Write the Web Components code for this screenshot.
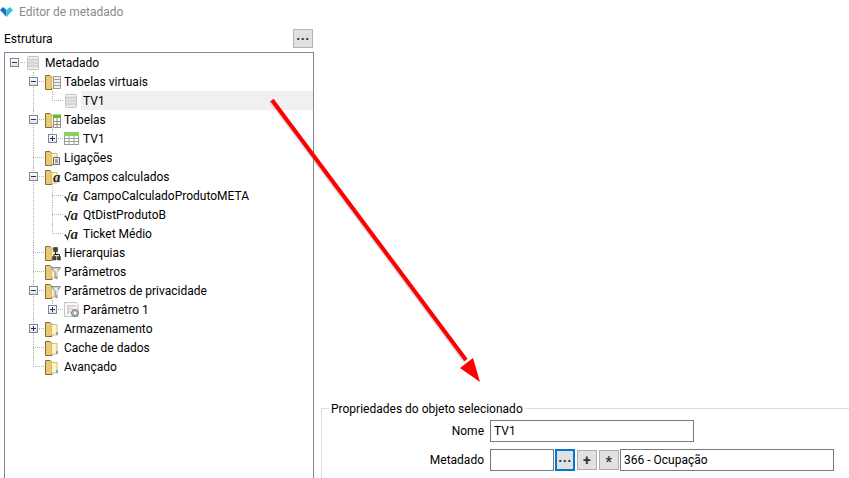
<!DOCTYPE html>
<html>
<head>
<meta charset="utf-8">
<title>Editor de metadado</title>
<style>
    html, body { margin: 0; height: 100%; background: #fff; overflow: hidden; }
    body { font: 12px Roboto, "Noto Sans", sans-serif; color: #000; }
</style>
</head>
<body>
<meta-editor>
    <meta-tree slot="tree">
        <tree-node toggle="minus" icon="table" label="Metadado" root>
            <tree-node toggle="minus" icon="folder-table" label="Tabelas virtuais">
                <tree-node icon="table" label="TV1" selected last></tree-node>
            </tree-node>
            <tree-node toggle="minus" icon="folder-grid" label="Tabelas">
                <tree-node toggle="plus" icon="grid" label="TV1" last></tree-node>
            </tree-node>
            <tree-node icon="folder-link" label="Ligações"></tree-node>
            <tree-node toggle="minus" icon="folder-a" label="Campos calculados">
                <tree-node icon="sqrt" label="CampoCalculadoProdutoMETA"></tree-node>
                <tree-node icon="sqrt" label="QtDistProdutoB"></tree-node>
                <tree-node icon="sqrt" label="Ticket Médio" last></tree-node>
            </tree-node>
            <tree-node icon="folder-tree" label="Hierarquias"></tree-node>
            <tree-node icon="folder-filter" label="Parâmetros"></tree-node>
            <tree-node toggle="minus" icon="folder-filter" label="Parâmetros de privacidade">
                <tree-node toggle="plus" icon="param" label="Parâmetro 1" last></tree-node>
            </tree-node>
            <tree-node toggle="plus" icon="folder" label="Armazenamento"></tree-node>
            <tree-node icon="folder" label="Cache de dados"></tree-node>
            <tree-node icon="folder" label="Avançado" last></tree-node>
        </tree-node>
    </meta-tree>
    <prop-group slot="props" title="Propriedades do objeto selecionado">
        <prop-row label="Nome">
            <text-box value="TV1" style="width:204px"></text-box>
        </prop-row>
        <prop-row label="Metadado">
            <text-box style="width:64px"></text-box>
            <tool-button text="..." focused style="margin-left:1px"></tool-button>
            <tool-button text="+" style="margin-left:2px"></tool-button>
            <tool-button text="*" style="margin-left:2px"></tool-button>
            <text-box value="366 - Ocupação" style="width:214px;margin-left:1px"></text-box>
        </prop-row>
    </prop-group>
</meta-editor>

<script>
// Icons for the tree, all drawn in a 16x16 box
const folderBack = `
    <path d="M.5 1.500h4.500l2 2v12h-6.500z" fill="#e9c877" stroke="#8a6d2c"/>
    <path d="M6.500 3.500h5.500v10.500h-5.500z" fill="#fdf3c4" stroke="#d9bd6e"/>`;

const ICONS = {
    "folder": folderBack + `<path d="M12 11v3" stroke="#4f9ad8" stroke-width="1.500"/>`,
    "table": `
        <rect x="1.500" y="1.500" width="11" height="13" rx="1" fill="#f2f2f2" stroke="#c2c2c2"/>
        <path d="M2 5h10M2 8h10M2 11h10" stroke="#b9b9b9" fill="none"/>
        <path d="M2 3.500h10M2 6.500h10M2 9.500h10M2 12.500h10" stroke="#e6e6e6" fill="none"/>`,
    "folder-table": folderBack + `
        <path d="M8.500 2.500h7v12h-7z" fill="#f2f2f2" stroke="#9c9c9c"/>
        <path d="M9 5.500h6M9 8.500h6M9 11.500h6" stroke="#9c9c9c"/>`,
    "folder-grid": folderBack + `
        <path d="M8.500 5.500h7v10h-7z" fill="#fff" stroke="#8f8f8f"/>
        <path d="M8 2.500h8v3.500h-8z" fill="#5dbd36"/>
        <path d="M9 9.500h6M9 12.500h6M12 6v9" stroke="#8f8f8f"/>`,
    "grid": `
        <path d="M.5 3.500h14v10h-14z" fill="#fff" stroke="#96998c"/>
        <path d="M0 1h15v4h-15z" fill="#8bd064"/>
        <path d="M1 7.500h13M1 10.500h13M5 5v8M10 5v8" stroke="#a0a398"/>`,
    "folder-link": folderBack + `
        <path d="M8.500 7.500h6v7h-6z" fill="#eee" stroke="#666"/>
        <path d="M10 10h3M10 12h3" stroke="#555"/>`,
    "folder-a": folderBack + `
        <text x="8" y="13" font-family="Liberation Serif, serif" font-style="italic" font-weight="700" font-size="15" fill="#222">a</text>`,
    "folder-tree": folderBack + `
        <path d="M8.500 2.500h4v4h-4zM7.500 11.500h3.500v3.500h-3.500zM12.500 11.500h3v3.500h-3z" fill="#444" stroke="#222" stroke-width=".5"/>
        <path d="M10.500 6.500v3M9 11.500v-2h5.500v2" stroke="#222" fill="none"/>`,
    "folder-filter": folderBack + `
        <path d="M6.500 3.500h9l-3.500 5v6.500l-2-1.500v-5z" fill="#cfd2d6" stroke="#858a90"/>
        <path d="M9 6h3v6" stroke="#fff" fill="none"/>`,
    "sqrt": `
        <path d="M.5 9.500l1-.5 2 4 2.500-8.500h2" fill="none" stroke="#2a2a2a" stroke-width="1.200"/>
        <text x="6.500" y="13" font-family="Liberation Serif, serif" font-style="italic" font-weight="700" font-size="15" fill="#2a2a2a">a</text>`,
    "param": `
        <path d="M.5 .5h12l1.500 1.500v12.500h-13.500z" fill="#f8f8f8" stroke="#c2c6ca"/>
        <path d="M3 4h9M3 7h6M3 10h4" stroke="#dfa69e"/>
        <path d="M4 4v8" stroke="#a9c6e0"/>
        <circle cx="11" cy="11" r="3.500" fill="#b5bcc3" stroke="#6f7880"/>
        <circle cx="11" cy="11" r="1.200" fill="#fff"/>`
};

const nodeTemplate = document.createElement("template");
nodeTemplate.innerHTML = `
    <style>
    :host {
        display: block;
        position: relative;
    }

    .row {
        display: flex;
        align-items: center;
        height: 19px;
        padding-left: 5px;
        position: relative;
    }

    .toggle {
        width: 9px;
        height: 9px;
        box-sizing: border-box;
        border: 1px solid #7b8794;
        background: linear-gradient(#fff, #e2e2e2);
        position: relative;
        margin-right: 7px;
        flex: none;
        z-index: 1;
    }

    .toggle.none {
        visibility: hidden;
    }

    .toggle::before, .toggle.plus::after {
        content: "";
        position: absolute;
        background: #24306b;
    }

    .toggle::before {
        left: 1px;
        right: 1px;
        top: 3px;
        height: 1px;
    }

    .toggle.plus::after {
        top: 1px;
        bottom: 1px;
        left: 3px;
        width: 1px;
    }

    svg {
        width: 16px;
        height: 16px;
        flex: none;
        overflow: visible;
        position: relative;
        z-index: 1;
    }

    .label {
        white-space: nowrap;
        margin-left: 1px;
        padding-left: 2px;
        height: 19px;
        line-height: 20px;
        flex: 1;
    }

    :host([selected]) .label {
        background: #f0f0f0;
    }

    /* dotted connectors over the tree background */
    .hline, .vline {
        position: absolute;
    }

    .hline {
        left: 9px;
        top: 9px;
        width: 11px;
        border-top: 1px dotted #b4b4b4;
    }

    .vline {
        left: 9px;
        top: 0;
        bottom: 0;
        border-left: 1px dotted #b4b4b4;
    }

    :host([last]) .vline {
        bottom: auto;
        height: 10px;
    }

    :host([root]) .vline {
        display: none;
    }

    .kids {
        margin-left: 19px;
    }
    </style>
    <span class="vline"></span>
    <div class="row">
        <span class="hline"></span>
        <span class="toggle"></span>
        <svg viewBox="0 0 16 16"></svg>
        <span class="label"></span>
    </div>
    <div class="kids"><slot></slot></div>
`;

class TreeNode extends HTMLElement {

    constructor() {
        super();
        this.root = this.attachShadow({ mode: "open" });
        this.root.appendChild(nodeTemplate.content.cloneNode(true));
    }

    connectedCallback() {
        this.root.querySelector(".label").textContent = this.getAttribute("label");
        this.root.querySelector("svg").innerHTML = ICONS[this.getAttribute("icon")] || "";
        this.root.querySelector(".toggle").classList.add(this.getAttribute("toggle") || "none");
    }
}

const treeTemplate = document.createElement("template");
treeTemplate.innerHTML = `
    <style>
    :host {
        display: block;
        height: 100%;
        box-sizing: border-box;
        border: 1px solid #828790;
        border-bottom: none;
        background: #fff;
        overflow: hidden;
    }
    </style>
    <slot></slot>
`;

class MetaTree extends HTMLElement {
    constructor() {
        super();
        this.attachShadow({ mode: "open" }).appendChild(treeTemplate.content.cloneNode(true));
    }
}

const boxTemplate = document.createElement("template");
boxTemplate.innerHTML = `
    <style>
    :host {
        display: block;
        height: 22px;
        box-sizing: border-box;
        border: 1px solid #7a7a7a;
        background: #fff;
        padding-left: 3px;
        line-height: 20px;
        white-space: nowrap;
        flex: none;
    }
    </style>
    <span></span>
`;

class TextBox extends HTMLElement {
    constructor() {
        super();
        this.root = this.attachShadow({ mode: "open" });
        this.root.appendChild(boxTemplate.content.cloneNode(true));
    }

    connectedCallback() {
        this.root.querySelector("span").textContent = this.getAttribute("value") || "";
    }
}

const buttonTemplate = document.createElement("template");
buttonTemplate.innerHTML = `
    <style>
    :host {
        display: flex;
        align-items: center;
        justify-content: center;
        width: 20px;
        height: 20px;
        margin-top: 1px;
        box-sizing: border-box;
        border: 1px solid #adadad;
        background: #e1e1e1;
        color: #333;
        font-weight: 700;
        flex: none;
    }

    :host([focused]) {
        height: 22px;
        margin-top: 0;
        border: 2px solid #0078d7;
    }

    span {
        line-height: 1;
        font-size: 14px;
        letter-spacing: .5px;
        position: relative;
    }

    :host([text="..."]) span {
        top: -3px;
    }

    :host([text="*"]) span {
        top: 2px;
    }
    </style>
    <span></span>
`;

class ToolButton extends HTMLElement {
    constructor() {
        super();
        this.root = this.attachShadow({ mode: "open" });
        this.root.appendChild(buttonTemplate.content.cloneNode(true));
    }

    connectedCallback() {
        this.root.querySelector("span").textContent = this.getAttribute("text");
    }
}

const rowTemplate = document.createElement("template");
rowTemplate.innerHTML = `
    <style>
    :host {
        display: flex;
        align-items: flex-start;
        height: 22px;
    }

    .caption {
        width: 162px;
        margin-right: 6px;
        text-align: right;
        line-height: 22px;
        flex: none;
    }
    </style>
    <span class="caption"></span>
    <slot></slot>
`;

class PropRow extends HTMLElement {
    constructor() {
        super();
        this.root = this.attachShadow({ mode: "open" });
        this.root.appendChild(rowTemplate.content.cloneNode(true));
    }

    connectedCallback() {
        this.root.querySelector(".caption").textContent = this.getAttribute("label");
    }
}

const groupTemplate = document.createElement("template");
groupTemplate.innerHTML = `
    <style>
    :host {
        display: block;
        height: 70px;
        box-sizing: border-box;
        border-top: 1px solid #dcdcdc;
        border-left: 1px solid #dcdcdc;
        position: relative;
    }

    .title {
        position: absolute;
        left: 7px;
        top: -8px;
        line-height: 17px;
        padding: 0 2px;
        background: #fff;
    }

    .rows {
        display: flex;
        flex-direction: column;
        gap: 7px;
        padding-top: 11px;
    }
    </style>
    <span class="title"></span>
    <div class="rows"><slot></slot></div>
`;

class PropGroup extends HTMLElement {
    constructor() {
        super();
        this.root = this.attachShadow({ mode: "open" });
        this.root.appendChild(groupTemplate.content.cloneNode(true));
    }

    connectedCallback() {
        this.root.querySelector(".title").textContent = this.getAttribute("title");
    }
}

const editorTemplate = document.createElement("template");
editorTemplate.innerHTML = `
    <style>
    :host {
        display: grid;
        grid-template-columns: 310px 1fr;
        grid-template-rows: 52px 1fr;
        column-gap: 7px;
        width: 849px;
        height: 478px;
        padding-left: 4px;
        box-sizing: border-box;
        position: relative;
        overflow: hidden;
    }

    .top {
        grid-column: 1 / 3;
        display: flex;
        flex-direction: column;
    }

    .title {
        display: flex;
        align-items: center;
        gap: 6px;
        height: 23px;
        margin-left: -4px;
        color: #8a8a8a;
    }

    .title svg {
        width: 13px;
        height: 10px;
    }

    .head {
        display: flex;
        align-items: center;
        justify-content: space-between;
        width: 309px;
        height: 29px;
        padding-top: 2px;
        box-sizing: border-box;
    }

    .more {
        width: 20px;
        height: 19px;
        box-sizing: border-box;
        border: 1px solid #b4b4b4;
        background: #e1e1e1;
        color: #333;
        font-weight: 700;
        font-size: 14px;
        letter-spacing: .5px;
        text-align: center;
        line-height: 10px;
    }

    .right {
        display: flex;
        flex-direction: column;
        justify-content: flex-end;
    }

    /* annotation drawn over the screenshot */
    .arrow {
        position: absolute;
        left: 0;
        top: 0;
        pointer-events: none;
    }
    </style>
    <div class="top">
        <div class="title">
            <svg viewBox="0 0 13 10"><path d="M0 3l3-3 3.500 3v7z" fill="#1f6fc6"/><path d="M13 3l-3-3-3.500 3v7z" fill="#35c4d8"/></svg>
            <span>Editor de metadado</span>
        </div>
        <div class="head">
            <span>Estrutura</span>
            <span class="more">...</span>
        </div>
    </div>
    <slot name="tree"></slot>
    <div class="right"><slot name="props"></slot></div>
    <svg class="arrow" width="849" height="478">
        <path d="M272 100L466 360" stroke="#8a8a8a" stroke-opacity=".35" stroke-width="4" transform="translate(-1 1)"/>
        <path d="M272 100L466 360" stroke="#ff0000" stroke-width="4"/>
        <path d="M480 382L460 368L473 358z" fill="#ff0000"/>
    </svg>
`;

class MetaEditor extends HTMLElement {
    constructor() {
        super();
        this.attachShadow({ mode: "open" }).appendChild(editorTemplate.content.cloneNode(true));
    }
}

customElements.define("tree-node", TreeNode);
customElements.define("meta-tree", MetaTree);
customElements.define("text-box", TextBox);
customElements.define("tool-button", ToolButton);
customElements.define("prop-row", PropRow);
customElements.define("prop-group", PropGroup);
customElements.define("meta-editor", MetaEditor);
</script>
</body>
</html>
